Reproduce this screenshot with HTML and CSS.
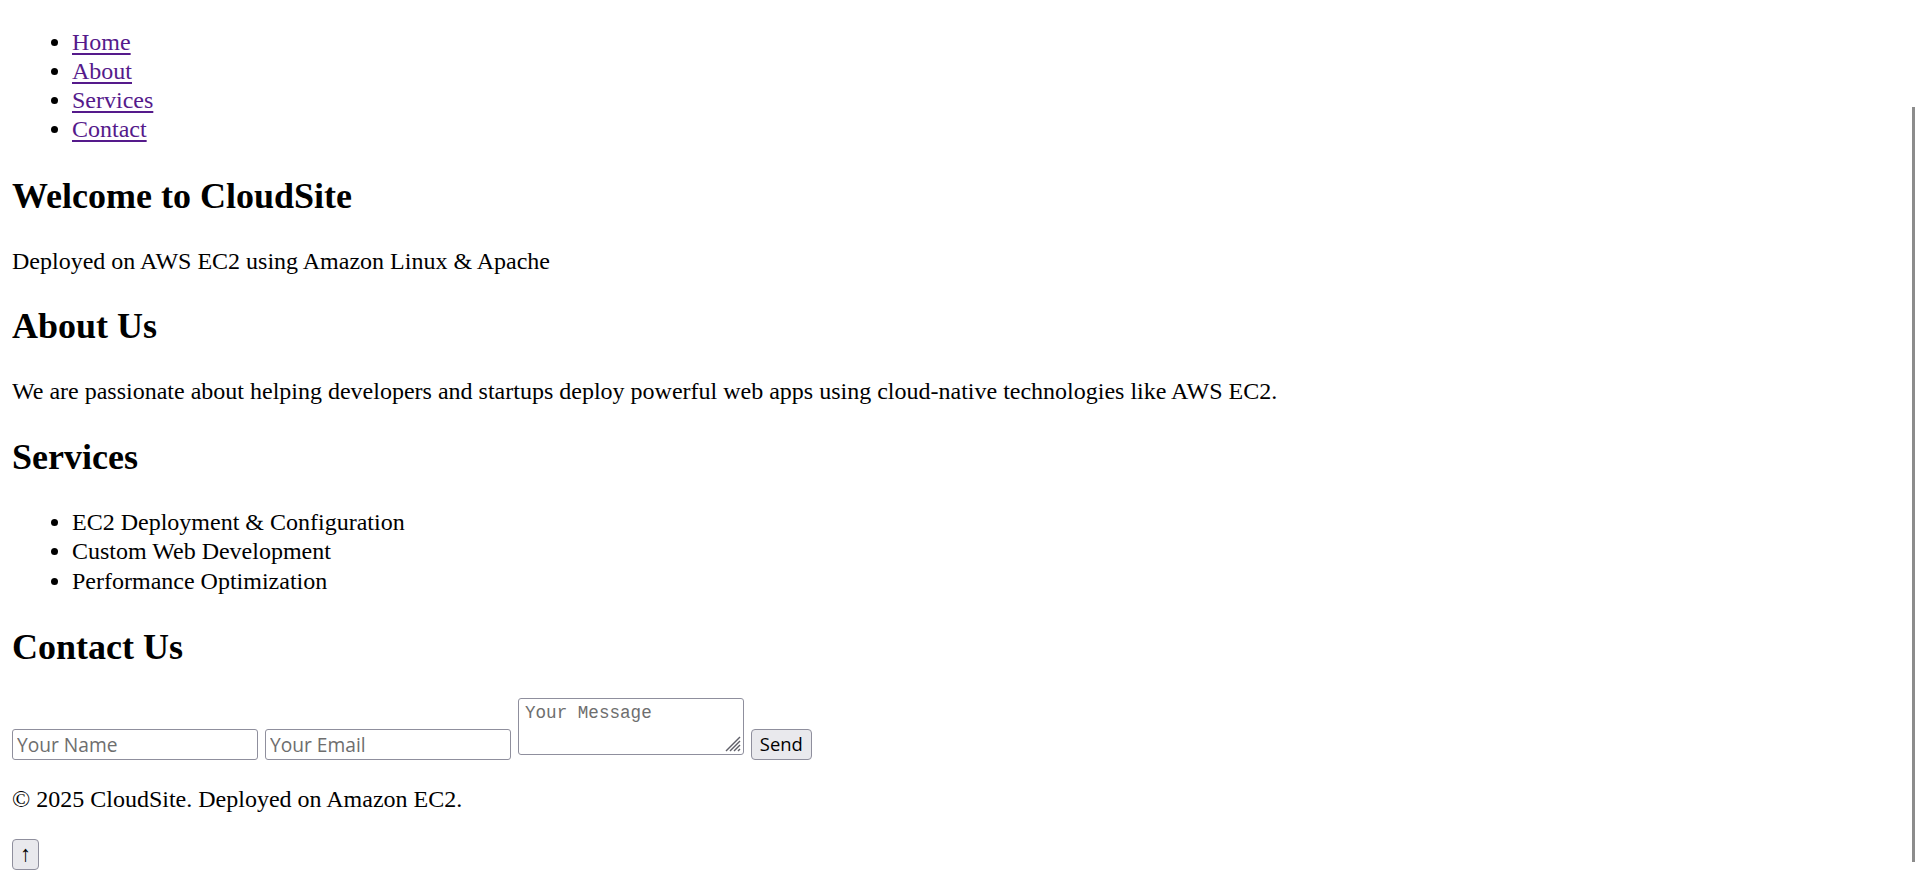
FILE: index.html
```html
<!DOCTYPE html>
<html lang="en">
<head>
<meta charset="utf-8">
<title>CloudSite</title>
<link rel="stylesheet" href="styles.css">
</head>
<body>
<header class="site-header">
  <nav class="main-nav">
    <ul class="nav-list">
      <li><a class="nav-link" href="#home">Home</a></li>
      <li><a class="nav-link" href="#about">About</a></li>
      <li><a class="nav-link" href="#services">Services</a></li>
      <li><a class="nav-link" href="#contact">Contact</a></li>
    </ul>
  </nav>
</header>
<section class="block" id="home">
  <h2 class="heading">Welcome to CloudSite</h2>
  <p class="text">Deployed on AWS EC2 using Amazon Linux &amp; Apache</p>
</section>
<section class="block" id="about">
  <h2 class="heading">About Us</h2>
  <p class="text">We are passionate about helping developers and startups deploy powerful web apps using cloud-native technologies like AWS EC2.</p>
</section>
<section class="block" id="services">
  <h2 class="heading">Services</h2>
  <ul class="service-list">
    <li>EC2 Deployment &amp; Configuration</li>
    <li>Custom Web Development</li>
    <li>Performance Optimization</li>
  </ul>
</section>
<section class="block" id="contact">
  <h2 class="heading">Contact Us</h2>
  <form class="contact-form">
    <input class="field" type="text" placeholder="Your Name">
    <input class="field" type="email" placeholder="Your Email">
    <span class="area-wrap">
      <textarea class="area" placeholder="Your Message"></textarea>
      <svg class="grip" width="16" height="16" viewBox="0 0 16 16"><g stroke="#5f5f68" stroke-width="1.4"><line x1="15" y1="1" x2="1" y2="15"/><line x1="15" y1="5" x2="5" y2="15"/><line x1="15" y1="9" x2="9" y2="15"/><line x1="15" y1="13" x2="13" y2="15"/></g></svg>
    </span>
    <button class="btn send-btn" type="button">Send</button>
  </form>
</section>
<footer class="site-footer">
  <p class="text">© 2025 CloudSite. Deployed on Amazon EC2.</p>
  <button class="btn top-btn" type="button">↑</button>
</footer>
<div class="scroll-thumb"></div>
</body>
</html>
```
FILE: styles.css
```css
html, body {
  background: #ffffff;
}
body {
  margin: 12px;
  font-family: "Liberation Serif", "Times New Roman", serif;
  font-size: 24px;
  line-height: 1.18;
  color: #000000;
}
.nav-list {
  margin: 15.5px 0 24px;
  padding-left: 60px;
}
.nav-list li,
.service-list li {
  line-height: 29.3px;
}
.nav-link {
  color: #551a8b;
  text-decoration: underline;
  text-decoration-thickness: 1.5px;
  text-underline-offset: 3px;
}
.heading {
  font-size: 36px;
  font-weight: bold;
  line-height: 1.18;
  margin: 29.88px 0;
}
.text {
  margin: 24px 0;
}
.service-list {
  margin: 24px 0;
  padding-left: 60px;
}
.contact-form {
  display: flex;
  align-items: flex-end;
  gap: 7px;
  margin: 0;
  padding-top: 0;
}
.field {
  box-sizing: border-box;
  width: 246px;
  height: 31.6px;
  margin: 0;
  padding: 0 4px;
  border: 1.5px solid #8f8f9d;
  border-radius: 3px;
  background: #ffffff;
  font-family: "Open Sans", "Liberation Sans", sans-serif;
  font-size: 19.2px;
  color: #000000;
  outline: none;
}
.field::placeholder {
  color: #6e6e6e;
  opacity: 1;
}
.area-wrap {
  position: relative;
  display: block;
  margin-bottom: 5px;
  height: 57.3px;
}
.area {
  box-sizing: border-box;
  display: block;
  width: 226px;
  height: 57.3px;
  margin: 0;
  padding: 4px 6px;
  border: 1.5px solid #8f8f9d;
  border-radius: 3px;
  resize: none;
  font-family: "Liberation Mono", "DejaVu Sans Mono", monospace;
  font-size: 17.6px;
  line-height: 1.2;
  outline: none;
}
.area::placeholder {
  color: #6e6e6e;
  opacity: 1;
}
.grip {
  position: absolute;
  right: 3px;
  bottom: 3px;
}
.btn {
  box-sizing: border-box;
  height: 31.6px;
  margin: 0;
  border: 1.5px solid #8f8f9d;
  border-radius: 4px;
  background: #e9e9ed;
  color: #000000;
  font-family: "Open Sans", "Liberation Sans", sans-serif;
  font-size: 18.4px;
  line-height: 1;
  padding: 0;
}
.send-btn {
  width: 60.7px;
}
.site-footer .text {
  margin: 25px 0 25px;
}
.top-btn {
  display: block;
  width: 27px;
  font-family: "Liberation Serif", serif;
  font-size: 22px;
}
.scroll-thumb {
  position: fixed;
  top: 107px;
  right: 0;
  width: 3.3px;
  height: 755px;
  background: #8c8c8c;
}
```
